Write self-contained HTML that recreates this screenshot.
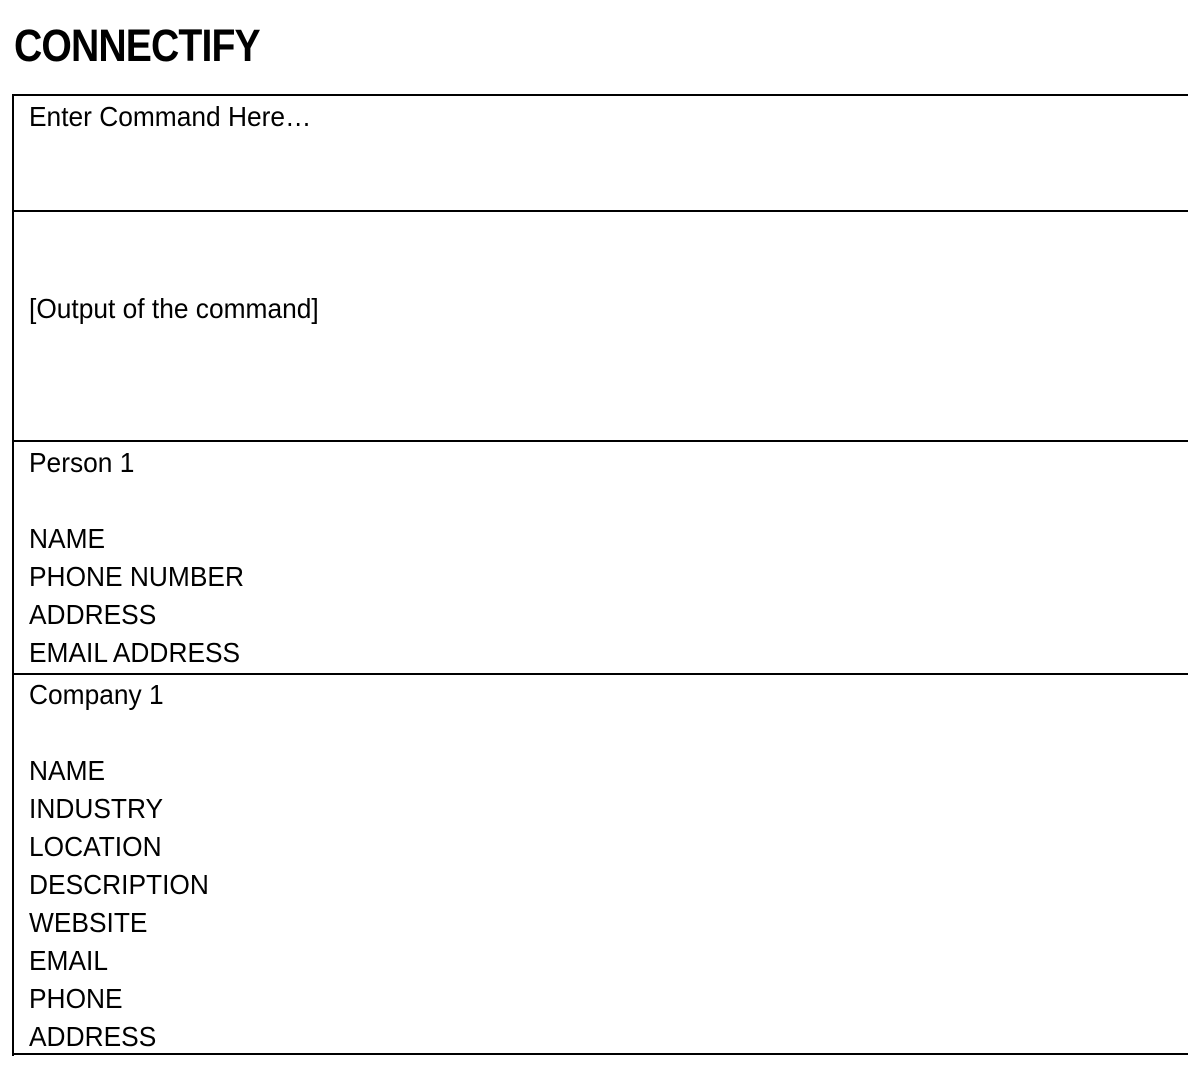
<!DOCTYPE html>
<html><head><meta charset="utf-8"><style>
body{margin:0;width:1188px;height:1070px;background:#fff;position:relative;overflow:hidden;font-family:"Liberation Sans",Arial,sans-serif;color:#000}
.h{position:absolute;left:12px;width:1200px;height:2px;background:#000}
.v{position:absolute;left:12px;top:94px;width:2px;height:962px;background:#000}
.t{position:absolute;left:29px;font-size:28px;line-height:38px;white-space:nowrap;transform:scaleX(0.94);transform-origin:0 0}
.title{position:absolute;left:14px;top:21px;font-size:45px;font-weight:bold;line-height:50px;transform:scaleX(0.87);transform-origin:0 0;letter-spacing:-1px}
</style></head><body>
<div class="title">CONNECTIFY</div>
<div class="v"></div>
<div class="h" style="top:94px"></div>
<div class="h" style="top:210px"></div>
<div class="h" style="top:440px"></div>
<div class="h" style="top:673px"></div>
<div class="h" style="top:1053px"></div>
<div class="t" style="top:98px">Enter Command Here…</div>
<div class="t" style="top:290px">[Output of the command]</div>
<div class="t" style="top:444px">Person 1</div>
<div class="t" style="top:520px">NAME</div>
<div class="t" style="top:558px">PHONE NUMBER</div>
<div class="t" style="top:596px">ADDRESS</div>
<div class="t" style="top:634px">EMAIL ADDRESS</div>
<div class="t" style="top:676px">Company 1</div>
<div class="t" style="top:752px">NAME</div>
<div class="t" style="top:790px">INDUSTRY</div>
<div class="t" style="top:828px">LOCATION</div>
<div class="t" style="top:866px">DESCRIPTION</div>
<div class="t" style="top:904px">WEBSITE</div>
<div class="t" style="top:942px">EMAIL</div>
<div class="t" style="top:980px">PHONE</div>
<div class="t" style="top:1018px">ADDRESS</div>
</body></html>
